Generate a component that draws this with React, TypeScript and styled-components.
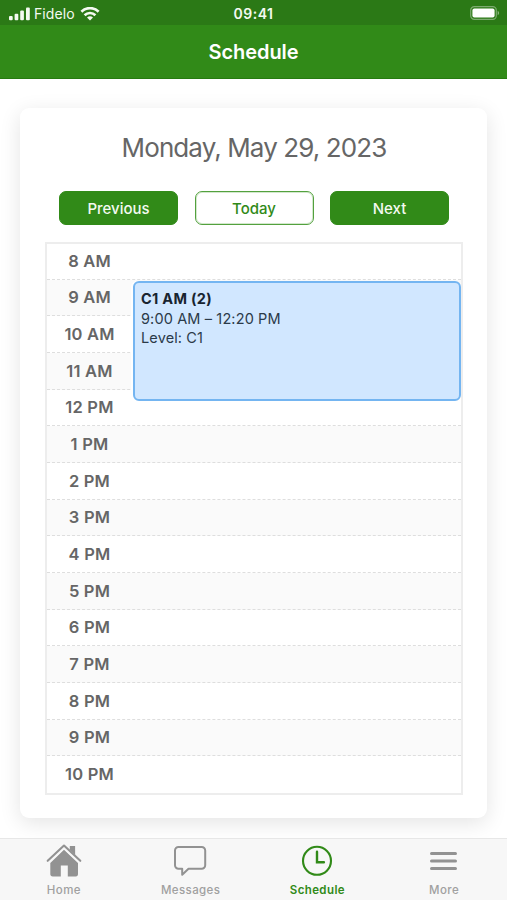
import React from "react";
import styled, { createGlobalStyle } from "styled-components";

const GlobalStyle = createGlobalStyle`
  * { box-sizing: border-box; }
  body { margin: 0; background: #fff; font-family: Inter, "Liberation Sans", sans-serif; }
`;

const Screen = styled.div`
  width: 507px;
  height: 900px;
  display: flex;
  flex-direction: column;
  overflow: hidden;
  background: #fff;
`;

const StatusBar = styled.div`
  height: 25px;
  flex: none;
  display: grid;
  grid-template-columns: 1fr auto 1fr;
  align-items: center;
  padding: 2px 7px 0 9px;
  background: #2b7916;
  color: #f4faf1;
`;

const Carrier = styled.div`
  display: flex;
  align-items: center;
  font-size: 14px;
  line-height: 20px;
  letter-spacing: 0.1px;
  svg { flex: none; display: block; }
`;

const CarrierName = styled.span`
  width: 42px;
  margin: 0 4px 0 3px;
  white-space: nowrap;
`;

const Clock = styled.div`
  margin: 0 1px 0 -1px;
  font-size: 14px;
  font-weight: 600;
  line-height: 20px;
  letter-spacing: 0.5px;
`;

const Battery = styled.div`
  display: flex;
  justify-content: flex-end;
  margin-top: -1px;
  svg { display: block; }
`;

const TitleBar = styled.header`
  height: 54px;
  flex: none;
  display: flex;
  align-items: center;
  justify-content: center;
  padding-top: 1px;
  background: #318a18;
  border-bottom: 1px solid #267b10;
  color: #fff;
  font-size: 20px;
  font-weight: 600;
  letter-spacing: -0.05px;
`;

const Content = styled.main`
  flex: 1;
  min-height: 0;
  padding: 29px 20px 0 20px;
  overflow: hidden;
`;

const Card = styled.section`
  height: 710px;
  padding: 25px 24px 0 25px;
  border-radius: 9px;
  background: #fff;
  box-shadow: 0 5px 21px rgba(0, 0, 0, 0.11);
`;

const DateHeading = styled.h1`
  margin: 0;
  text-align: center;
  color: #666;
  font-size: 26px;
  font-weight: 400;
  line-height: 30px;
  letter-spacing: -0.9px;
  white-space: nowrap;
`;

const DayControls = styled.div`
  display: grid;
  grid-template-columns: repeat(3, 119px);
  column-gap: 16.5px;
  justify-content: center;
  margin-top: 28px;
`;

const DayButton = styled.button<{ $outlined?: boolean }>`
  height: 34px;
  padding: 0;
  border: 1px solid ${(p) => (p.$outlined ? "#53a13e" : "#318a18")};
  box-shadow: ${(p) => (p.$outlined ? "inset 0 0 0 1px #d3e8cd" : "none")};
  border-radius: 7px;
  background: ${(p) => (p.$outlined ? "#fff" : "#318a18")};
  color: ${(p) => (p.$outlined ? "#318a18" : "#f4faf1")};
  font-family: inherit;
  font-size: 15px;
  font-weight: 500;
  letter-spacing: 0;
`;

const DayGrid = styled.div`
  position: relative;
  margin-top: 17px;
  height: 553px;
  border: 2px solid #ededed;
  display: grid;
  grid-template-rows: 35.67px repeat(14, 36.67px);
`;

const HourRow = styled.div<{ $shaded: boolean }>`
  display: grid;
  grid-template-columns: 85px 1fr;
  align-items: center;
  background: ${(p) => (p.$shaded ? "#fafafa" : "#fff")};
  border-bottom: 1px dashed #dedede;
  &:nth-child(15) { border-bottom-color: transparent; }
`;

const HourLabel = styled.span`
  text-align: center;
  color: #666;
  font-size: 16.5px;
  font-weight: 600;
  line-height: 20px;
  letter-spacing: 0.2px;
`;

const Lesson = styled.article`
  position: absolute;
  left: 86px;
  top: 37px;
  right: 0;
  height: 120px;
  padding: 6px 6px;
  border: 2px solid #74b5f1;
  border-radius: 6px;
  background: #d1e7ff;
  box-shadow: -2px 0 0 #fff;
  color: #2b3a49;
  font-size: 14.5px;
  line-height: 19.5px;
  letter-spacing: 0.13px;
`;

const LessonName = styled.div`
  color: #182430;
  font-weight: 700;
  letter-spacing: 0.3px;
`;

const TabBar = styled.nav`
  height: 62px;
  flex: none;
  display: grid;
  grid-template-columns: repeat(4, 1fr);
  border-top: 1px solid #e7e7e7;
  background: #f7f7f7;
  position: relative;
`;

const Tab = styled.div<{ $active?: boolean }>`
  display: flex;
  flex-direction: column;
  align-items: center;
  padding: 4px 0 0 1px;
  color: ${(p) => (p.$active ? "#318a18" : "#929292")};
  svg { display: block; }
`;

const TabLabel = styled.span<{ $active?: boolean }>`
  margin-top: 4px;
  font-size: 11.5px;
  font-weight: ${(p) => (p.$active ? 600 : 500)};
  line-height: 14px;
  letter-spacing: 0.4px;
  color: ${(p) => (p.$active ? "#318a18" : "#a0a0a0")};
`;

const SignalIcon = () => (
  <svg width="22" height="14" viewBox="0 0 22 14" fill="currentColor">
    <rect x="0" y="9" width="3.7" height="4.3" rx="1" />
    <rect x="5.6" y="6.7" width="3.7" height="6.6" rx="1" />
    <rect x="11.2" y="3.6" width="3.7" height="9.7" rx="1" />
    <rect x="17" y="0.4" width="3.8" height="12.9" rx="1" />
  </svg>
);

const WifiIcon = () => (
  <svg width="20" height="14" viewBox="0 0 20 14" fill="none" stroke="currentColor" strokeWidth="2.7">
    <path d="M1.4 4.7a12.2 12.2 0 0 1 17.2 0" />
    <path d="M4.6 8.2a7.7 7.7 0 0 1 10.8 0" />
    <path d="M10 13.6 7 10.6a4.3 4.3 0 0 1 6 0Z" fill="currentColor" stroke="none" />
  </svg>
);

const BatteryIcon = () => (
  <svg width="30" height="14" viewBox="0 0 30 14">
    <rect x="0.7" y="0.7" width="25.6" height="12.6" rx="3.6" fill="none" stroke="#7dab70" strokeWidth="1.2" />
    <rect x="2.4" y="2.4" width="22.2" height="9.2" rx="2" fill="#fff" />
    <path d="M27.7 4.8a2.5 2.5 0 0 1 0 4.5Z" fill="#8eb782" />
  </svg>
);

const HomeIcon = () => (
  <svg width="36" height="36" viewBox="0 0 36 36">
    <path d="m18 6.8 14 13.3V31c0 1.7-.7 2.4-2.2 2.4h-8V22.6h-7v10.8h-8c-1.7 0-2.5-.8-2.5-2.4V20Z" fill="currentColor" />
    <path d="M1.6 18.2 18 3l16.4 15.2" fill="none" stroke="#f7f7f7" strokeWidth="4.8" />
    <path d="M23.8 3h5.3v9l-5.3-5Z" fill="currentColor" />
    <path d="M1.7 17.8 18 2.6l16.3 15.2" fill="none" stroke="currentColor" strokeWidth="2.1" strokeLinecap="round" strokeLinejoin="round" />
  </svg>
);

const MessageIcon = () => (
  <svg width="36" height="36" viewBox="0 0 36 36" fill="none" stroke="currentColor" strokeWidth="2" strokeLinejoin="round">
    <path d="M5.5 3.9h23.200a3.5 3.5 0 0 1 3.5 3.5v14.8a3.5 3.5 0 0 1-3.5 3.5H15.500l-6.3 6v-6H5.500a3.5 3.5 0 0 1-3.5-3.5V7.4A3.5 3.5 0 0 1 5.500 3.9Z" />
  </svg>
);

const ClockIcon = () => (
  <svg width="36" height="36" viewBox="0 0 36 36" fill="none" stroke="currentColor" strokeWidth="2.1">
    <circle cx="18" cy="17.8" r="14" />
    <path d="M18 8.8v10.4h6.9" strokeLinecap="round" strokeWidth="2.4" />
  </svg>
);

const MenuIcon = () => (
  <svg width="36" height="36" viewBox="0 0 36 36" stroke="currentColor" strokeWidth="3" strokeLinecap="round">
    <path d="M5.5 10.6h24M5.5 18h24M5.5 25.5h24" />
  </svg>
);

const hours = [
  "8 AM", "9 AM", "10 AM", "11 AM", "12 PM", "1 PM", "2 PM", "3 PM",
  "4 PM", "5 PM", "6 PM", "7 PM", "8 PM", "9 PM", "10 PM",
];

const tabs = [
  { label: "Home", Icon: HomeIcon },
  { label: "Messages", Icon: MessageIcon },
  { label: "Schedule", Icon: ClockIcon, active: true },
  { label: "More", Icon: MenuIcon },
];

export default function App() {
  return (
    <>
      <GlobalStyle />
      <Screen>
        <StatusBar>
          <Carrier>
            <SignalIcon />
            <CarrierName>Fidelo</CarrierName>
            <WifiIcon />
          </Carrier>
          <Clock>09:41</Clock>
          <Battery><BatteryIcon /></Battery>
        </StatusBar>
        <TitleBar>Schedule</TitleBar>
        <Content>
          <Card>
            <DateHeading>Monday, May 29, 2023</DateHeading>
            <DayControls>
              <DayButton>Previous</DayButton>
              <DayButton $outlined>Today</DayButton>
              <DayButton>Next</DayButton>
            </DayControls>
            <DayGrid>
              {hours.map((hour, i) => (
                <HourRow key={hour} $shaded={i % 2 === 1}>
                  <HourLabel>{hour}</HourLabel>
                </HourRow>
              ))}
              <Lesson>
                <LessonName>C1 AM (2)</LessonName>
                <div>9:00 AM – 12:20 PM</div>
                <div>Level: C1</div>
              </Lesson>
            </DayGrid>
          </Card>
        </Content>
        <TabBar>
          {tabs.map(({ label, Icon, active }) => (
            <Tab key={label} $active={active}>
              <Icon />
              <TabLabel $active={active}>{label}</TabLabel>
            </Tab>
          ))}
        </TabBar>
      </Screen>
    </>
  );
}
